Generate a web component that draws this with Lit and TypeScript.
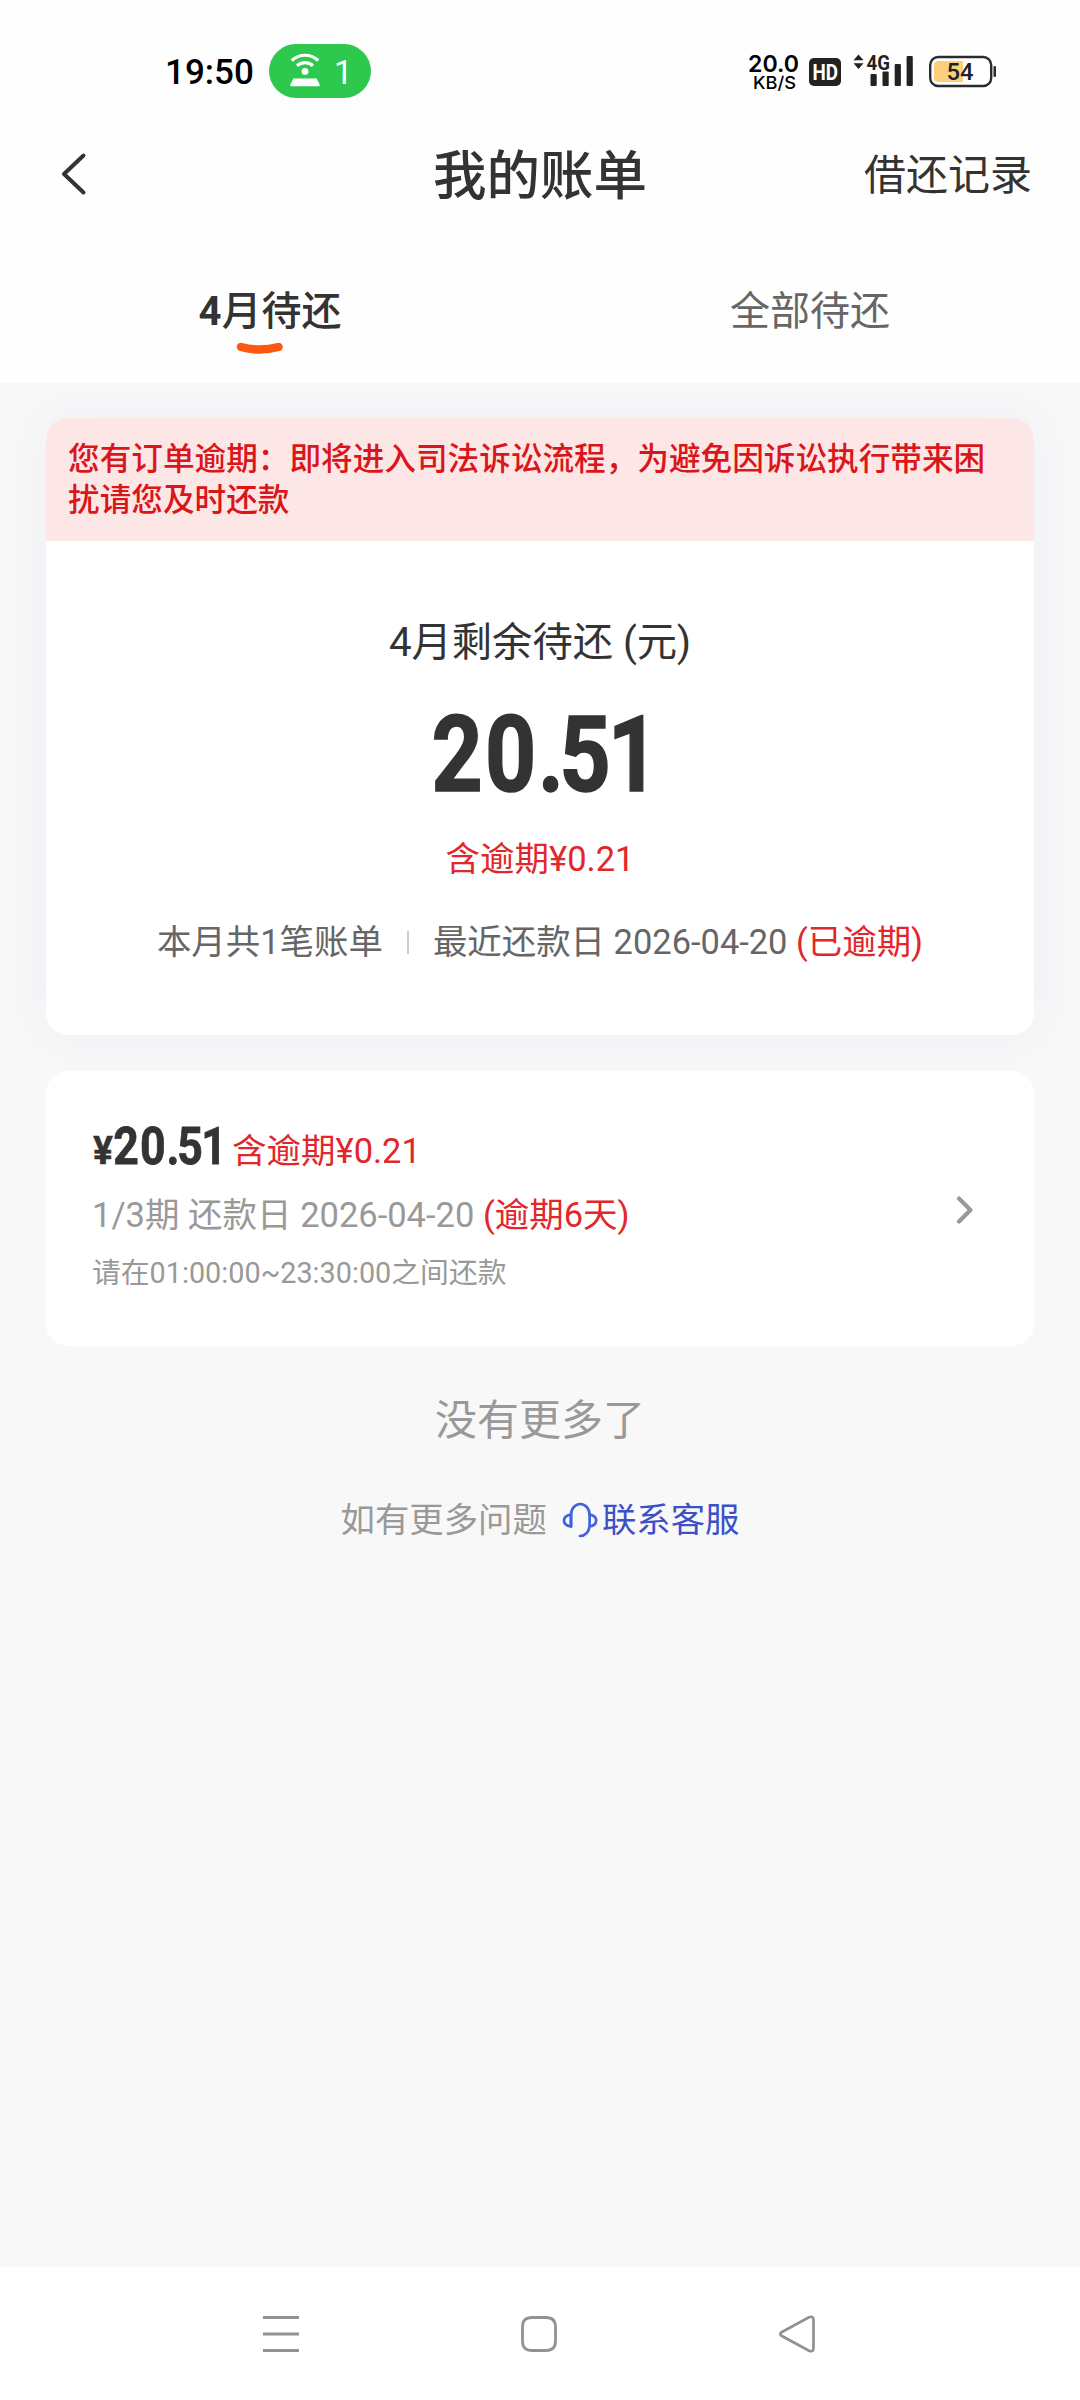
import { LitElement, html, css } from "lit";
import { customElement } from "lit/decorators.js";

@customElement("status-bar")
class StatusBar extends LitElement {
  static styles = css`
    :host {
      display: flex;
      box-sizing: border-box;
      height: 128px;
      padding: 44px 84px 0 165px;
      align-items: flex-start;
      color: #000;
      font-family: Roboto, sans-serif;
    }
    .time { font-size: 35px; font-weight: 500; line-height: 58px; width: 104px; white-space: nowrap; }
    .right { margin-left: auto; height: 54px; display: block; }
    svg { display: block; }
    .rate { font-family: Inter, sans-serif; font-weight: 600; }
    .unit { font-family: Inter, sans-serif; font-weight: 500; }
    .bold { font-weight: 700; }
    .mid { font-weight: 500; }
  `;
  render() {
    return html`
      <span class="time">19:50</span>
      <svg width="102" height="54" viewBox="0 0 102 54">
        <rect width="102" height="54" rx="27" fill="#2fc84f" />
        <g fill="none" stroke="#fff" stroke-width="3.2" stroke-linecap="butt">
          <path d="M22.8 16.6a19 19 0 0 1 26.4 0" />
          <path d="M28 21.8a11.8 11.8 0 0 1 16 0" />
        </g>
        <circle cx="36" cy="27.4" r="3.4" fill="#fff" />
        <path d="M24.4 34.4h23.2l3 6c.4 1-.2 1.8-1.200 1.800H22.600c-1 0-1.600-.8-1.200-1.800z" fill="#fff" />
        <text class="num" x="65" y="39.500" font-size="33" fill="#fff">1</text>
      </svg>
      <svg class="right" width="250" height="54" viewBox="746 44 250 54">
        <text class="rate" x="748" y="72" font-size="23" textLength="51" lengthAdjust="spacingAndGlyphs">20.0</text>
        <text class="unit" x="753" y="89.300" font-size="17.500" textLength="43" lengthAdjust="spacingAndGlyphs">KB/S</text>
        <rect x="809" y="58" width="32" height="28" rx="5" fill="#222" />
        <text class="bold" x="812.500" y="80" font-size="22.500" fill="#fff" textLength="25.500" lengthAdjust="spacingAndGlyphs">HD</text>
        <g fill="#222">
          <path d="M858.500 54.500l5 5.800h-10zM858.500 69l5-5.800h-10z" />
          <text class="bold" x="866.500" y="69.500" font-size="20" textLength="23.500" lengthAdjust="spacingAndGlyphs">4G</text>
          <rect x="870.500" y="74" width="6.200" height="12" rx="1" />
          <rect x="882.500" y="71.500" width="6.200" height="14.500" rx="1" />
          <rect x="894.700" y="64" width="6.200" height="22" rx="1" />
          <rect x="906.600" y="56" width="6.200" height="30" rx="1" />
        </g>
        <rect x="930.200" y="57" width="61" height="29" rx="8" fill="#fff" stroke="#2b2b2b" stroke-width="2.400" />
        <path d="M938 61h25v21h-25a4 4 0 0 1-4-4V65a4 4 0 0 1 4-4z" fill="#fad07c" />
        <rect x="993.500" y="66" width="2.500" height="11" rx="1" fill="#2b2b2b" />
        <text class="mid" x="946.500" y="80.400" font-size="24" fill="#222" textLength="27" lengthAdjust="spacingAndGlyphs">54</text>
      </svg>
    `;
  }
}

@customElement("bill-header")
class BillHeader extends LitElement {
  static styles = css`
    :host { display: block; height: 255px; }
    .bar {
      display: grid;
      grid-template-columns: 1fr auto 1fr;
      align-items: center;
      height: 94px;
      padding: 0 48px 0 60px;
      color: #333;
    }
    .back { display: block; margin-bottom: 2px; }
    .title { font-size: 53.500px; font-weight: 500; margin: 0 0 8px -12px; }
    .link { font-size: 42px; justify-self: end; margin-bottom: 8px; }
    .tabs { display: grid; grid-template-columns: 1fr 1fr; height: 161px; }
    .tab {
      display: flex;
      flex-direction: column;
      align-items: center;
      padding-top: 62px;
      font-size: 40px;
      line-height: 56px;
      color: #666;
    }
    .tab.on { color: #333; font-weight: 500; }
    .tab b { font-weight: 700; }
    .mark { display: block; margin: 1px 20px 0 0; }
  `;
  render() {
    return html`
      <div class="bar">
        <svg class="back" width="28" height="44" viewBox="0 0 28 44">
          <path d="M23.500 3.500L4 22l19.500 18.500" fill="none" stroke="#333" stroke-width="4" stroke-linecap="round" stroke-linejoin="round" />
        </svg>
        <span class="title">我的账单</span>
        <span class="link">借还记录</span>
      </div>
      <div class="tabs">
        <div class="tab on">
          <span><b>4</b>月待还</span>
          <svg class="mark" width="48" height="16" viewBox="0 0 48 16">
            <path d="M5 6q18.500 5 37.500 0" fill="none" stroke="#fd5712" stroke-width="8.500" stroke-linecap="round" />
          </svg>
        </div>
        <div class="tab"><span>全部待还</span></div>
      </div>
    `;
  }
}

@customElement("bill-summary")
class BillSummary extends LitElement {
  static styles = css`
    :host {
      display: block;
      height: 617px;
      border-radius: 22px;
      background: #fff;
      overflow: hidden;
      box-shadow: 0 0 46px rgba(90, 110, 230, 0.06);
    }
    .notice {
      box-sizing: border-box;
      height: 123px;
      padding: 22px 20px 0 22px;
      background: #fde7e6;
      color: #d9171b;
      font-size: 31.640px;
      font-weight: 500;
      line-height: 40.500px;
    }
    .body { display: flex; flex-direction: column; align-items: center; }
    .label { margin-top: 72px; font-size: 40.300px; line-height: 60px; color: #333; }
    .amount { display: block; margin-top: 31px; font-weight: 700; overflow: visible; }
    .overdue { margin-top: 35px; font-size: 34.500px; line-height: 60px; }
    .red { color: #e2272b; }
    .meta { display: flex; align-items: center; margin-top: 23px; font-size: 34.450px; line-height: 60px; color: #666; white-space: pre; }
    .rule { width: 2px; height: 23px; margin: 0 24px; background: #ccc; }
  `;
  render() {
    return html`
      <div class="notice">您有订单逾期：即将进入司法诉讼流程，为避免因诉讼执行带来困扰请您及时还款</div>
      <div class="body">
        <div class="label">4月剩余待还 (元)</div>
        <svg class="amount" width="220" height="90" viewBox="0 0 220 90">
          <g transform="translate(0 86.500) scale(.85 1)">
            <text x="1.800 64.700 127 152.400 209" y="0" font-size="105" fill="#333" stroke="#333" stroke-width="1.600">20.51</text>
          </g>
        </svg>
        <div class="overdue red">含逾期¥0.21</div>
        <div class="meta"><span>本月共1笔账单</span><i class="rule"></i><span>最近还款日 2026-04-20 </span><span class="red">(已逾期)</span></div>
      </div>
    `;
  }
}

@customElement("bill-item")
class BillItem extends LitElement {
  static styles = css`
    :host {
      display: flex;
      justify-content: space-between;
      box-sizing: border-box;
      height: 275px;
      padding: 50px 60px 0 46px;
      border-radius: 22px;
      background: #fff;
    }
    .top { display: flex; align-items: flex-start; height: 58px; font-size: 34.500px; line-height: 60px; }
    .price { display: block; font-weight: 700; overflow: visible; margin-right: 2px; }
    .red { color: #e2272b; }
    .due { margin-top: 7px; font-size: 34.500px; line-height: 58px; color: #999; white-space: pre; }
    .hours { margin-top: 3px; font-size: 28.800px; line-height: 52px; color: #999; }
    .go { display: block; margin-top: 73px; }
  `;
  render() {
    return html`
      <div>
        <div class="top">
          <svg class="price" width="138" height="58" viewBox="0 0 138 58" fill="#333" stroke="#333">
            <text x="1" y="43" font-size="39" stroke-width=".4" textLength="20" lengthAdjust="spacingAndGlyphs">¥</text>
            <g transform="translate(20.500 42.600) scale(.425 .495)">
              <text x="1.800 64.700 127 152.400 209" y="0" font-size="105" stroke-width="1.600">20.51</text>
            </g>
          </svg>
          <span class="red">含逾期¥0.21</span>
        </div>
        <div class="due">1/3期 还款日 2026-04-20 <span class="red">(逾期6天)</span></div>
        <div class="hours">请在01:00:00~23:30:00之间还款</div>
      </div>
      <svg class="go" width="20" height="32" viewBox="0 0 20 32">
        <path d="M5 4.500L16.500 16 5 27.500" fill="none" stroke="#999" stroke-width="4.200" stroke-linecap="round" stroke-linejoin="round" />
      </svg>
    `;
  }
}

@customElement("nav-bar")
class NavBar extends LitElement {
  static styles = css`
    :host {
      display: flex;
      justify-content: space-between;
      box-sizing: border-box;
      height: 133px;
      padding: 47px 263px 0 261px;
      background: #fff;
    }
  `;
  render() {
    return html`
      <svg width="40" height="40" viewBox="0 0 40 40">
        <path d="M2 3.500h36M2 20h36M2 36.500h36" stroke="#929292" stroke-width="3" />
      </svg>
      <svg width="40" height="40" viewBox="0 0 40 40">
        <path d="M13 3.500h14Q36.500 3.500 36.500 13v14Q36.500 36.500 27 36.500H13Q3.500 36.500 3.500 27V13Q3.500 3.500 13 3.500z" fill="none" stroke="#929292" stroke-width="2.800" />
      </svg>
      <svg width="40" height="40" viewBox="0 0 40 40">
        <path d="M4.500 18.200L32 3.300Q36.500 1.500 36.500 6v28Q36.500 38.500 32 36.700L4.500 21.800Q2 20 4.500 18.200z" fill="none" stroke="#929292" stroke-width="2.700" />
      </svg>
    `;
  }
}

@customElement("app-root")
class AppRoot extends LitElement {
  static styles = css`
    :host {
      display: flex;
      flex-direction: column;
      width: 1080px;
      height: 2400px;
      background: #f8f8f8;
      font-family: Roboto, "Noto Sans CJK SC", sans-serif;
    }
    .head { background: #fefefe; }
    .main { flex: 1; padding: 35px 46px 0; }
    .item { margin-top: 36px; }
    .end { margin-top: 45px; text-align: center; font-size: 42px; line-height: 60px; color: #999; }
    .help { display: flex; justify-content: center; align-items: center; margin-top: 39px; font-size: 34.400px; line-height: 60px; color: #999; }
    .phone { display: block; margin: 0 4px 0 15px; }
    .contact { color: #3c50c8; }
  `;
  render() {
    return html`
      <div class="head">
        <status-bar></status-bar>
        <bill-header></bill-header>
      </div>
      <div class="main">
        <bill-summary></bill-summary>
        <bill-item class="item"></bill-item>
        <div class="end">没有更多了</div>
        <div class="help">
          <span>如有更多问题</span>
          <svg class="phone" width="36" height="36" viewBox="0 0 36 36" fill="none" stroke="#3f62dd" stroke-width="2.700" stroke-linecap="round" stroke-linejoin="round">
            <path d="M9 24.500V13a9.300 11 0 0 1 18.600 0v11" />
            <path d="M9 12.500q-7 1.200-7 6t7 6z" />
            <path d="M27.600 12.500q6.600 1.200 6.600 6t-6.600 6q-1.500 9-9.600 9.500" />
          </svg>
          <span class="contact">联系客服</span>
        </div>
      </div>
      <nav-bar></nav-bar>
    `;
  }
}
